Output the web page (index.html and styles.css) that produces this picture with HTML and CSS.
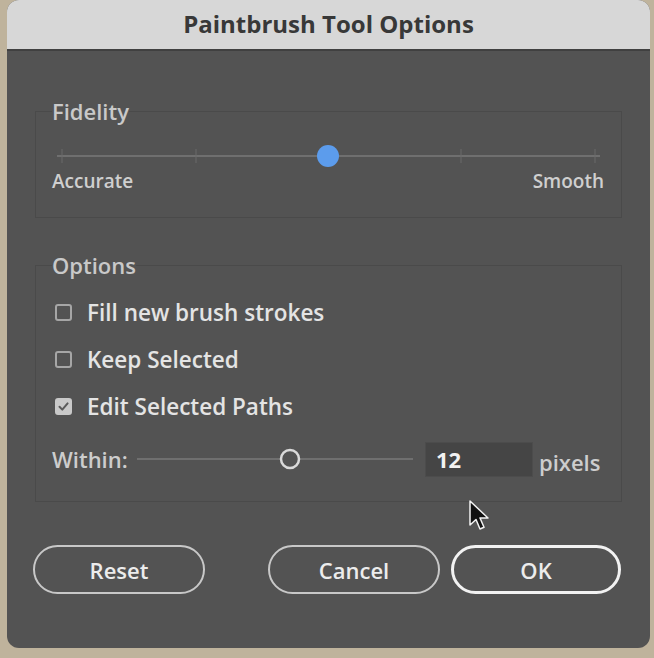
FILE: index.html
```html
<!DOCTYPE html>
<html>
<head>
    <link rel="stylesheet" href="styles.css">
</head>
<body>
    <div class="dialog">
        <div class="title-bar">Paintbrush Tool Options</div>

        <fieldset class="group fidelity">
            <legend>Fidelity</legend>
            <svg class="fidelity-slider" width="552" height="24" viewBox="0 0 552 24">
                <line x1="5" y1="12" x2="548" y2="12" stroke="#6f6f6f" stroke-width="2"/>
                <line x1="10" y1="5" x2="10" y2="19" stroke="#6a6a6a" stroke-width="1"/>
                <line x1="144" y1="5" x2="144" y2="19" stroke="#6a6a6a" stroke-width="1"/>
                <line x1="409" y1="5" x2="409" y2="19" stroke="#6a6a6a" stroke-width="1"/>
                <line x1="543" y1="5" x2="543" y2="19" stroke="#6a6a6a" stroke-width="1"/>
                <circle cx="276" cy="12" r="11" fill="#5c9cec"/>
            </svg>
            <div class="slider-labels">
                <span>Accurate</span>
                <span>Smooth</span>
            </div>
        </fieldset>

        <fieldset class="group options">
            <legend>Options</legend>
            <div class="check-row">
                <span class="checkbox"></span>
                <span>Fill new brush strokes</span>
            </div>
            <div class="check-row">
                <span class="checkbox"></span>
                <span>Keep Selected</span>
            </div>
            <div class="check-row">
                <span class="checkbox checked">
                    <svg width="17" height="17" viewBox="0 0 17 17">
                        <path d="M4.5 8.8 L7.3 11.6 L12.6 5.4" fill="none" stroke="#5a5a5a" stroke-width="2" stroke-linecap="round" stroke-linejoin="round"/>
                    </svg>
                </span>
                <span>Edit Selected Paths</span>
            </div>
            <div class="within-row">
                <span class="within-label">Within:</span>
                <svg class="within-slider" width="276" height="24" viewBox="0 0 276 24">
                    <line x1="0" y1="12" x2="276" y2="12" stroke="#787878" stroke-width="1.5"/>
                    <circle cx="153" cy="12" r="9" fill="#535353" stroke="#dadada" stroke-width="2.5"/>
                </svg>
                <div class="num-field">12</div>
                <span class="unit">pixels</span>
            </div>
        </fieldset>

        <div class="buttons">
            <button class="btn reset">Reset</button>
            <button class="btn cancel">Cancel</button>
            <button class="btn ok">OK</button>
        </div>

        <svg class="cursor" width="24" height="34" viewBox="0 0 24 34">
            <path d="M2 1 L2 25 L8 19.5 L12 29 L16 27.3 L12 18 L20 18 Z" fill="#111" stroke="#f2f2f2" stroke-width="1.5" stroke-linejoin="round"/>
        </svg>
    </div>
</body>
</html>
```

FILE: styles.css
```css
/* Dialog styling */
body {
    margin: 0;
    background-color: #bfb39c;
    font-family: "Open Sans", "Noto Sans", sans-serif;
}

.dialog {
    position: relative;
    margin-left: 7px;
    width: 643px;
    height: 648px;
    background-color: #535353;
    border-radius: 12px;
    overflow: hidden;
}

.title-bar {
    height: 49px;
    line-height: 47px;
    background-color: #d7d7d7;
    border-bottom: 2px solid #404040;
    text-align: center;
    font-size: 24px;
    font-weight: 700;
    color: #383838;
}

.group {
    margin: 0 28px;
    padding: 0 17px 0 16px;
    border: 1px solid #4a4a4a;
    min-width: 0;
}

.group legend {
    padding: 0;
    font-size: 22px;
    line-height: 22px;
    font-weight: 600;
    color: #c9c9c9;
}

.fidelity {
    margin-top: 49px;
    padding-bottom: 26px;
}

.fidelity-slider {
    display: block;
    margin-top: 22px;
}

.slider-labels {
    display: flex;
    justify-content: space-between;
    margin-top: 3px;
    font-size: 19px;
    line-height: 20px;
    font-weight: 600;
    color: #cfcfcf;
}

.options {
    margin-top: 36px;
    padding-bottom: 24px;
}

.check-row {
    display: flex;
    align-items: center;
    height: 26px;
    margin-top: 21px;
    padding-left: 3px;
    font-size: 22.5px;
    font-weight: 600;
    color: #e4e4e4;
}

.options legend + .check-row {
    margin-top: 23px;
}

.checkbox {
    box-sizing: border-box;
    width: 17px;
    height: 17px;
    margin-right: 15px;
    border: 2px solid #a6a6a6;
    border-radius: 3px;
}

.checkbox.checked {
    background-color: #c9c9c9;
    border-color: #c9c9c9;
}

.checkbox svg {
    display: block;
    margin: -2px;
}

.within-row {
    display: flex;
    align-items: center;
    height: 36px;
    margin-top: 22px;
    font-size: 22px;
    font-weight: 600;
    color: #cdcdcd;
}

.within-label {
    width: 76px;
    white-space: nowrap;
}

.within-slider {
    margin-left: 9px;
}

.num-field {
    box-sizing: border-box;
    width: 108px;
    height: 35px;
    margin-left: 12px;
    padding-left: 10px;
    line-height: 33px;
    background-color: #454545;
    border: 1px solid #4c4c4c;
    color: #f2f2f2;
    font-weight: 700;
}

.unit {
    margin-left: 6px;
    padding-top: 6px;
}

.buttons {
    display: flex;
    margin-top: 43px;
    padding-left: 26px;
}

.btn {
    box-sizing: border-box;
    width: 172px;
    height: 49px;
    border: 2px solid #c8c8c8;
    border-radius: 25px;
    background-color: transparent;
    color: #ececec;
    font-family: inherit;
    font-size: 22px;
    font-weight: 600;
}

.cancel {
    margin-left: 63px;
}

.ok {
    width: 170px;
    margin-left: 11px;
    border: 3px solid #f2f2f2;
}

.cursor {
    position: absolute;
    left: 461px;
    top: 500px;
}
```
